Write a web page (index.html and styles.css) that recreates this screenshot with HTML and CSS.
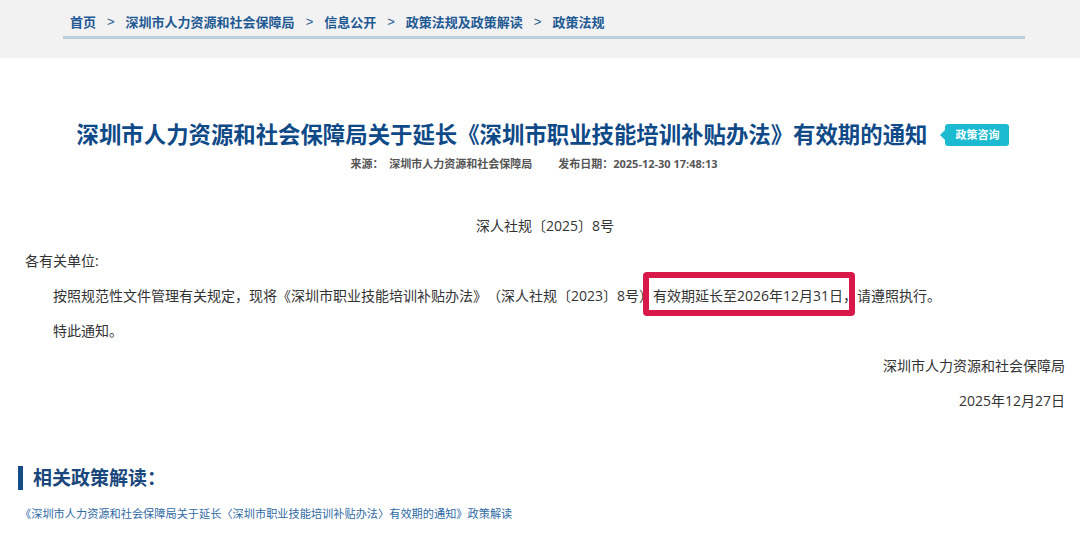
FILE: index.html
```html
<!DOCTYPE html>
<html lang="zh-CN">
<head>
    <meta charset="UTF-8">
    <meta name="viewport" content="width=device-width, initial-scale=1.0">
    <title>深圳市人力资源和社会保障局关于延长《深圳市职业技能培训补贴办法》有效期的通知</title>
    <link rel="stylesheet" href="styles.css">
</head>
<body>
    <!-- Breadcrumb band -->
    <div class="crumb-band">
        <div class="crumb">
            <a href="#">首页</a>
            <span class="sep">&gt;</span>
            <a href="#">深圳市人力资源和社会保障局</a>
            <span class="sep">&gt;</span>
            <a href="#">信息公开</a>
            <span class="sep">&gt;</span>
            <a href="#">政策法规及政策解读</a>
            <span class="sep">&gt;</span>
            <a href="#">政策法规</a>
        </div>
    </div>

    <div class="article">
        <div class="title-row">
            <h1>深圳市人力资源和社会保障局关于延长《深圳市职业技能培训补贴办法》有效期的通知</h1>
            <span class="tag">政策咨询</span>
        </div>
        <div class="meta">
            <span>来源：&nbsp;&nbsp;深圳市人力资源和社会保障局</span>
            <span>发布日期：2025-12-30 17:48:13</span>
        </div>

        <div class="content">
            <p class="doc-no">深人社规〔2025〕8号</p>
            <p>各有关单位:</p>
            <p class="indent">按照规范性文件管理有关规定，现将《深圳市职业技能培训补贴办法》（深人社规〔2023〕8号）<span class="mark">有效期延长至2026年12月31日</span>，请遵照执行。</p>
            <p class="indent">特此通知。</p>
            <p class="sign">深圳市人力资源和社会保障局</p>
            <p class="sign">2025年12月27日</p>
        </div>

        <!-- Related policy reading -->
        <h2 class="related-title">相关政策解读：</h2>
        <a class="related-link" href="#">《深圳市人力资源和社会保障局关于延长〈深圳市职业技能培训补贴办法〉有效期的通知》政策解读</a>
    </div>
</body>
</html>
```

FILE: styles.css
```css
body {
    margin: 0;
    padding: 0;
    font-family: "Open Sans", "Noto Sans CJK SC", sans-serif;
    background: #ffffff;
    color: #333333;
    text-spacing-trim: space-all;
}
a {
    text-decoration: none;
}

/* Breadcrumb */
.crumb-band {
    background: #f2f2f2;
    height: 58px;
}
.crumb {
    margin-left: 63px;
    width: 962px;
    padding: 12px 0 4px 7px;
    box-sizing: border-box;
    border-bottom: 3px solid #bccfdc;
    display: flex;
    align-items: center;
    font-size: 13px;
    font-weight: bold;
    line-height: 20px;
}
.crumb a {
    color: #1f5a94;
}
.crumb .sep {
    color: #1f5a94;
    margin: 0 11px;
    font-weight: normal;
    font-family: "Liberation Sans", sans-serif;
}

/* Title */
.article {
    padding-top: 60px;
}
.title-row {
    display: flex;
    justify-content: center;
    align-items: center;
    gap: 18px;
    padding-left: 6px;
}
h1 {
    margin: 0;
    font-family: "Noto Sans CJK SC", sans-serif;
    font-size: 22.4px;
    line-height: 30px;
    color: #0f4a88;
    font-weight: bold;
}
.tag {
    position: relative;
    margin-top: 4px;
    background: #1bbad0;
    color: #ffffff;
    font-size: 11px;
    font-weight: bold;
    line-height: 22px;
    padding: 0 10px;
    border-radius: 3px;
}
.tag::before {
    content: "";
    position: absolute;
    left: -5px;
    top: 6px;
    border-top: 5px solid transparent;
    border-bottom: 5px solid transparent;
    border-right: 5px solid #1bbad0;
}
.meta {
    margin-top: 8px;
    display: flex;
    justify-content: center;
    gap: 26px;
    font-size: 11px;
    font-weight: bold;
    line-height: 16px;
    color: #555555;
    margin-right: 12px;
}

/* Body text */
.content {
    margin-top: 36px;
    padding: 0 15px 0 25px;
    font-size: 14px;
    line-height: 35px;
    color: #333333;
}
.content p {
    margin: 0;
}
.doc-no {
    text-align: center;
}
.indent {
    text-indent: 28px;
}
.sign {
    text-align: right;
}
.mark {
    position: relative;
}
.mark::after {
    content: "";
    position: absolute;
    left: -10px;
    right: -12px;
    top: -14px;
    bottom: -11px;
    border: 6px solid #d81848;
    border-radius: 4px;
}

/* Related */
.related-title {
    margin: 48px 0 0 18px;
    padding-left: 10px;
    border-left: 5px solid #144c87;
    font-size: 19px;
    line-height: 24px;
    color: #1a477c;
    font-weight: bold;
}
.related-link {
    display: block;
    margin: 16px 0 0 20px;
    font-size: 11.2px;
    line-height: 16px;
    color: #2f6aa4;
}
```
